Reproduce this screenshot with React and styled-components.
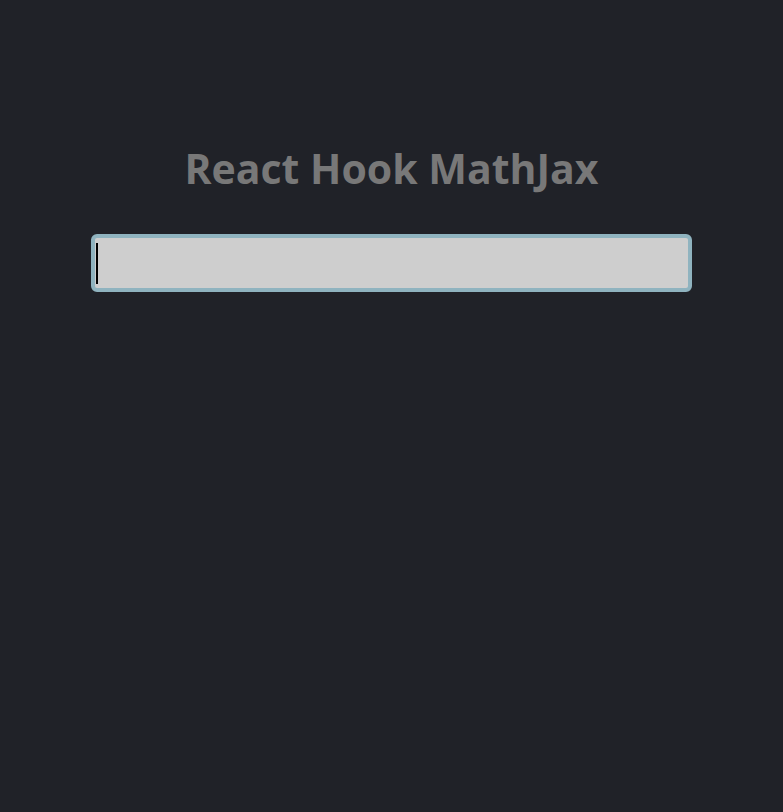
import React from "react";
import styled, { createGlobalStyle } from "styled-components";

const GlobalStyle = createGlobalStyle`
  html, body {
    margin: 0;
    padding: 0;
    background: #202228;
  }
  body {
    font-family: "Open Sans", "DejaVu Sans", sans-serif;
  }
`;

const Page = styled.div`
  min-height: 812px;
  display: flex;
  flex-direction: column;
  align-items: center;
  padding-top: 138px;
  box-sizing: border-box;
`;

const Title = styled.h1`
  margin: 0;
  color: #787878;
  font-size: 41px;
  font-weight: 700;
  line-height: 60px;
`;

const Field = styled.div`
  position: relative;
  margin-top: 36px;
  width: 601px;
  height: 58px;
`;

const Input = styled.input`
  width: 100%;
  height: 100%;
  box-sizing: border-box;
  background: #cecece;
  border: 4px solid #8fb3bf;
  border-radius: 6px;
  outline: none;
  padding: 0 4px;
  font-size: 32px;
  font-family: "Open Sans", sans-serif;
  color: #000;
  caret-color: transparent;
`;

const Caret = styled.span`
  position: absolute;
  left: 5px;
  top: 9px;
  width: 2px;
  height: 41px;
  background: #000;
  pointer-events: none;
`;

export default function App() {
  return (
    <>
      <GlobalStyle />
      <Page>
        <Title>React Hook MathJax</Title>
        <Field>
          <Input autoFocus />
          <Caret />
        </Field>
      </Page>
    </>
  );
}
